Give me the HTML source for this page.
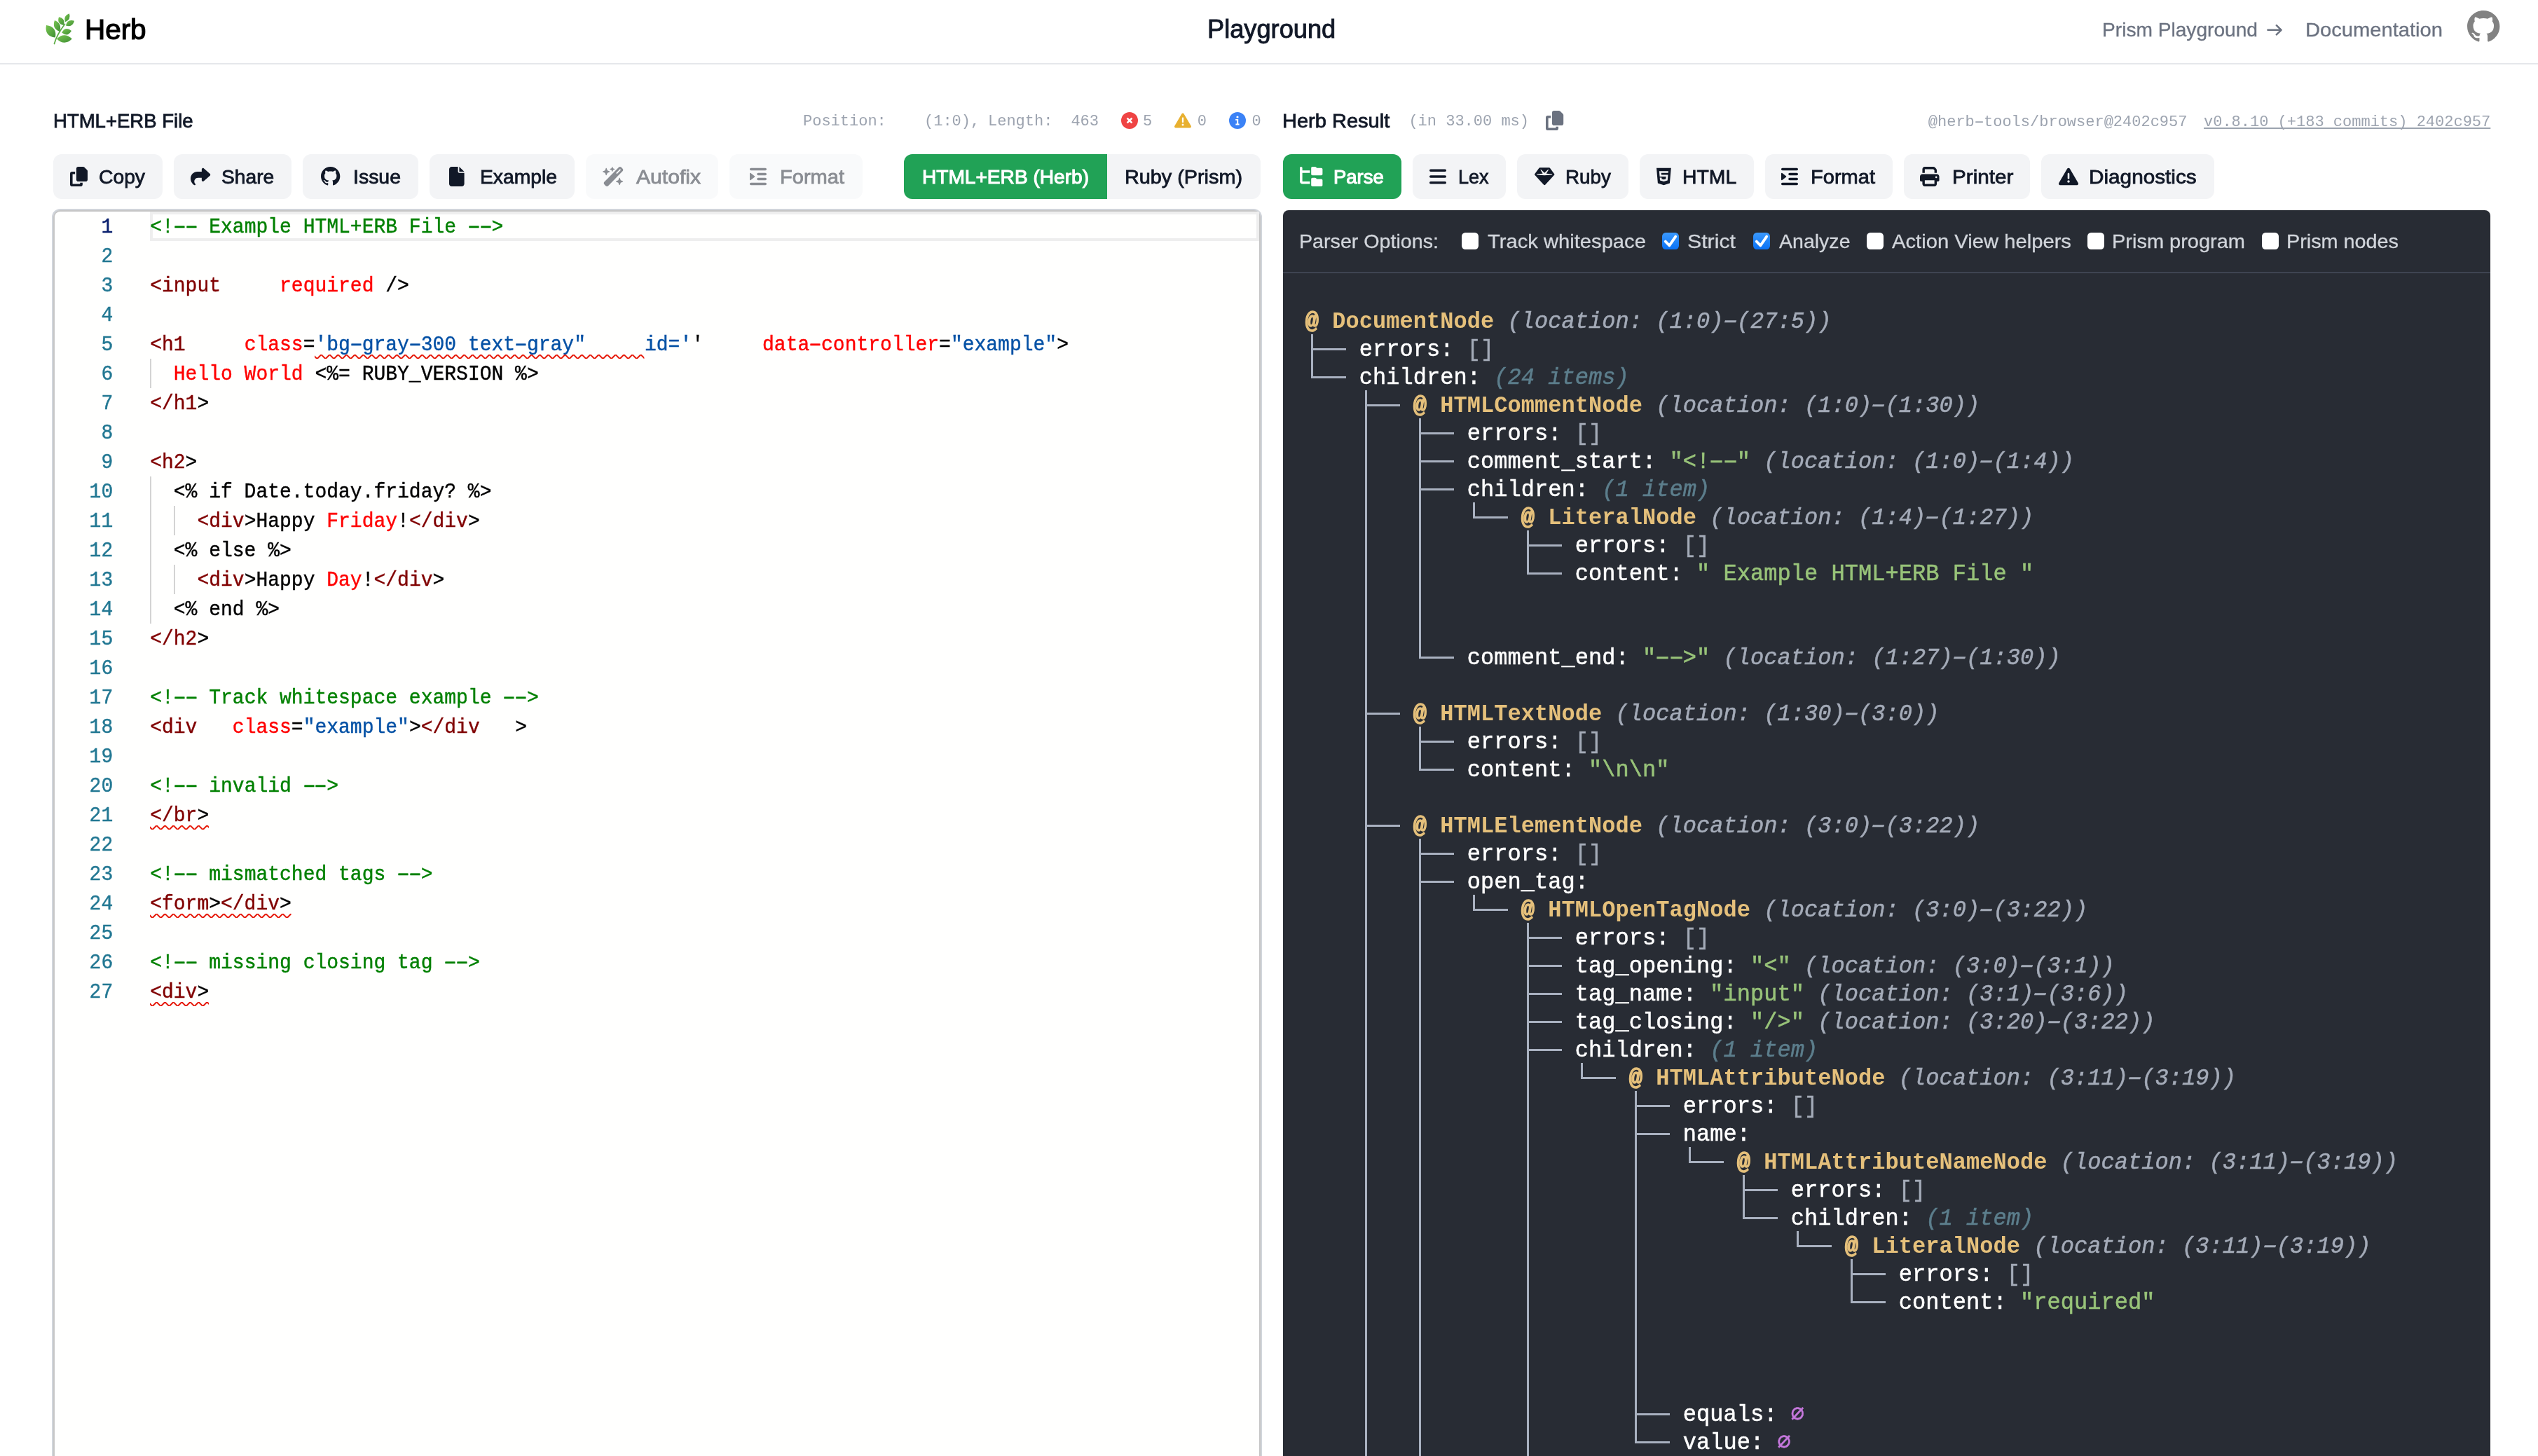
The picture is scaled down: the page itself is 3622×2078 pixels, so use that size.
<!DOCTYPE html>
<html><head><meta charset="utf-8"><style>
html,body{margin:0;padding:0;background:#fff;overflow:hidden;}
@media (max-width:2400px){#root{zoom:1 !important;}}
#root{zoom:2;will-change:transform;position:relative;width:1811px;height:1039px;overflow:hidden;background:#fff;font-family:"Liberation Sans", sans-serif;}
.t{position:absolute;white-space:pre;margin:0;padding:0;}
.m{font-family:"Liberation Mono", monospace;}
svg.t{overflow:visible;}
b.hy{display:inline-block;font-weight:inherit;transform:scaleX(1.75);}
</style></head><body><div id="root">
<div class="t" style="left:0.00px;top:45.00px;width:1811.00px;height:1.00px;background:#e5e7eb"></div>
<svg class="t" style="left:30px;top:7.5px;width:26px;height:26px" viewBox="0 0 52 52"><defs><linearGradient id="lf" x1="0" y1="0" x2="1" y2="1"><stop offset="0" stop-color="#79c552"/><stop offset="1" stop-color="#3f8f33"/></linearGradient></defs><path d="M17.5 47.5 C20 38 26 28 32.5 19.5" stroke="#5fae48" stroke-width="1.8" fill="none" stroke-linecap="round"/><path d="M18.90 38.60Q21.73 23.00 6.00 21.00Q3.17 36.60 18.90 38.60Z" fill="url(#lf)"/><path d="M21.00 40.40Q31.85 50.95 42.80 40.50Q31.95 29.95 21.00 40.40Z" fill="url(#lf)"/><path d="M25.00 30.00Q29.29 18.59 18.00 14.00Q13.71 25.41 25.00 30.00Z" fill="url(#lf)"/><path d="M28.20 31.40Q36.56 38.57 42.00 29.00Q33.64 21.83 28.20 31.40Z" fill="url(#lf)"/><path d="M30.70 21.00Q33.86 11.42 24.00 9.30Q20.84 18.88 30.70 21.00Z" fill="url(#lf)"/><path d="M33.90 21.40Q43.54 24.68 46.00 14.80Q36.36 11.52 33.90 21.40Z" fill="url(#lf)"/><path d="M32.90 16.40Q41.72 13.24 38.90 4.30Q30.08 7.46 32.90 16.40Z" fill="url(#lf)"/></svg>
<div class="t" style="left:60.50px;top:11.22px;font-size:20px;line-height:20px;color:#000000;font-weight:400;transform:scaleX(1.0104);transform-origin:0 0;-webkit-text-stroke:0.6px #000000;">Herb</div>
<div class="t" style="left:861.30px;top:11.76px;font-size:18px;line-height:18px;color:#111827;font-weight:400;transform:scaleX(1.0059);transform-origin:0 0;-webkit-text-stroke:0.45px #111827;">Playground</div>
<div class="t" style="left:1500.00px;top:14.40px;font-size:14px;line-height:14px;color:#6b7280;font-weight:400;transform:scaleX(1.0046);transform-origin:0 0;-webkit-text-stroke:0.15px #6b7280;">Prism Playground</div>
<svg class="t" style="left:1618px;top:17.6px;width:10.6px;height:7.8px" viewBox="0 0 10.6 7.8"><path d="M0.2 3.9H9.8M6.4 0.6L9.8 3.9L6.4 7.2" stroke="#6b7280" stroke-width="1.25" fill="none" stroke-linecap="round" stroke-linejoin="round"/></svg>
<div class="t" style="left:1644.75px;top:14.40px;font-size:14px;line-height:14px;color:#6b7280;font-weight:400;transform:scaleX(1.0407);transform-origin:0 0;-webkit-text-stroke:0.15px #6b7280;">Documentation</div>
<svg class="t" style="left:1760.50px;top:7.30px;width:23.20px;height:22.80px" viewBox="0 0 16 16" preserveAspectRatio="none" fill="#828282"><path d="M8 0C3.58 0 0 3.58 0 8c0 3.54 2.29 6.53 5.47 7.59.4.07.55-.17.55-.38 0-.19-.01-.82-.01-1.49-2.01.37-2.53-.49-2.69-.94-.09-.23-.48-.94-.82-1.13-.28-.15-.68-.52-.01-.53.63-.01 1.08.58 1.23.82.72 1.21 1.87.87 2.33.66.07-.52.28-.87.51-1.07-1.78-.2-3.64-.89-3.64-3.95 0-.87.31-1.59.82-2.15-.08-.2-.36-1.02.08-2.12 0 0 .67-.21 2.2.82.64-.18 1.32-.27 2-.27.68 0 1.360.09 2 .27 1.53-1.04 2.2-.82 2.2-.82.44 1.1.16 1.92.08 2.12.51.56.82 1.27.82 2.15 0 3.07-1.87 3.75-3.65 3.95.29.25.54.73.54 1.48 0 1.07-.01 1.93-.01 2.2 0 .21.15.46.55.38A8.013 8.013 0 0016 8c0-4.42-3.58-8-8-8z"/></svg>
<div class="t" style="left:37.75px;top:79.55px;font-size:14px;line-height:14px;color:#111827;font-weight:400;transform:scaleX(0.9831);transform-origin:0 0;-webkit-text-stroke:0.4px #111827;">HTML+ERB File</div>
<div class="t m" style="left:573.00px;top:81.72px;font-size:11px;line-height:11px;color:#9ca3af;">Position:</div>
<div class="t m" style="left:659.50px;top:81.72px;font-size:11px;line-height:11px;color:#9ca3af;">(1:0),</div>
<div class="t m" style="left:705.00px;top:81.72px;font-size:11px;line-height:11px;color:#9ca3af;">Length:</div>
<div class="t m" style="left:764.20px;top:81.72px;font-size:11px;line-height:11px;color:#9ca3af;">463</div>
<svg class="t" style="left:799.75px;top:79.9px;width:12px;height:12px" viewBox="0 0 12 12"><circle cx="6" cy="6" r="6" fill="#ef4444"/><path d="M4.3 4.3L7.7 7.7M7.7 4.3L4.3 7.7" stroke="#fff" stroke-width="1.3" stroke-linecap="butt"/></svg>
<div class="t m" style="left:815.50px;top:81.72px;font-size:11px;line-height:11px;color:#9ca3af;">5</div>
<svg class="t" style="left:838.00px;top:80.00px;width:12.00px;height:12.00px" viewBox="0 0 512 512" preserveAspectRatio="none" fill="#e8b02f"><path d="M256 32c14.2 0 27.3 7.5 34.5 19.8l216 368c7.3 12.4 7.3 27.7 .2 40.1S486.3 480 472 480H40c-14.3 0-27.6-7.7-34.7-20.1s-7-27.8 .2-40.1l216-368C228.7 39.5 241.8 32 256 32zm0 128c-13.3 0-24 10.7-24 24V296c0 13.3 10.7 24 24 24s24-10.7 24-24V184c0-13.3-10.7-24-24-24zm32 224a32 32 0 1 0 -64 0 32 32 0 1 0 64 0z"/></svg>
<div class="t m" style="left:854.40px;top:81.72px;font-size:11px;line-height:11px;color:#9ca3af;">0</div>
<svg class="t" style="left:877px;top:79.9px;width:12px;height:12px" viewBox="0 0 12 12"><circle cx="6" cy="6" r="6" fill="#3b82f6"/><path d="M4.6 5H6.6V8.3H7.3V9.2H4.7V8.3H5.5V5.9H4.6Z" fill="#fff"/><circle cx="6" cy="3.5" r="0.8" fill="#fff"/></svg>
<div class="t m" style="left:893.25px;top:81.72px;font-size:11px;line-height:11px;color:#9ca3af;">0</div>
<div class="t" style="left:38.00px;top:110.00px;width:78.00px;height:32.00px;background:#f3f4f6;border-radius:6px;"></div>
<svg class="t" style="left:50.00px;top:119.00px;width:12.50px;height:14.00px" viewBox="0 0 448 512" preserveAspectRatio="none" fill="#111827"><path d="M208 0H332.1c12.7 0 24.9 5.1 33.9 14.1l67.9 67.9c9 9 14.1 21.2 14.1 33.9V336c0 26.5-21.5 48-48 48H208c-26.5 0-48-21.5-48-48V48c0-26.5 21.5-48 48-48zM48 128h80v64H64V448H256V416h64v48c0 26.5-21.5 48-48 48H48c-26.5 0-48-21.5-48-48V176c0-26.5 21.5-48 48-48z"/></svg>
<div class="t" style="left:70.40px;top:119.65px;font-size:14px;line-height:14px;color:#111827;font-weight:400;transform:scaleX(1.0097);transform-origin:0 0;-webkit-text-stroke:0.4px #111827;">Copy</div>
<div class="t" style="left:124.00px;top:110.00px;width:84.00px;height:32.00px;background:#f3f4f6;border-radius:6px;"></div>
<svg class="t" style="left:135.90px;top:119.00px;width:14.10px;height:14.00px" viewBox="0 0 512 512" preserveAspectRatio="none" fill="#111827"><path d="M307 34.8c-11.5 5.1-19 16.6-19 29.2v64H176C78.8 128 0 206.8 0 304C0 417.3 81.5 467.9 100.2 478.1c2.5 1.4 5.3 1.9 8.1 1.9c10.9 0 19.7-8.9 19.7-19.7c0-7.5-4.3-14.4-9.8-19.5C108.8 431.9 96 414.4 96 384c0-53 43-96 96-96h96v64c0 12.6 7.4 24.1 19 29.2s25 3 34.4-5.4l160-144c6.7-6.1 10.6-14.7 10.6-23.8s-3.8-17.7-10.6-23.8l-160-144c-9.4-8.5-22.9-10.6-34.4-5.4z"/></svg>
<div class="t" style="left:158.15px;top:119.65px;font-size:14px;line-height:14px;color:#111827;font-weight:400;transform:scaleX(1.0065);transform-origin:0 0;-webkit-text-stroke:0.4px #111827;">Share</div>
<div class="t" style="left:216.00px;top:110.00px;width:82.50px;height:32.00px;background:#f3f4f6;border-radius:6px;"></div>
<svg class="t" style="left:229.00px;top:119.20px;width:13.65px;height:13.60px" viewBox="0 0 16 16" preserveAspectRatio="none" fill="#111827"><path d="M8 0C3.58 0 0 3.58 0 8c0 3.54 2.29 6.53 5.47 7.59.4.07.55-.17.55-.38 0-.19-.01-.82-.01-1.49-2.01.37-2.53-.49-2.69-.94-.09-.23-.48-.94-.82-1.13-.28-.15-.68-.52-.01-.53.63-.01 1.08.58 1.23.82.72 1.21 1.87.87 2.33.66.07-.52.28-.87.51-1.07-1.78-.2-3.64-.89-3.64-3.95 0-.87.31-1.59.82-2.15-.08-.2-.36-1.02.08-2.12 0 0 .67-.21 2.2.82.64-.18 1.32-.27 2-.27.68 0 1.360.09 2 .27 1.53-1.04 2.2-.82 2.2-.82.44 1.1.16 1.92.08 2.12.51.56.82 1.27.82 2.15 0 3.07-1.87 3.75-3.65 3.95.29.25.54.73.54 1.48 0 1.07-.01 1.93-.01 2.2 0 .21.15.46.55.38A8.013 8.013 0 0016 8c0-4.42-3.58-8-8-8z"/></svg>
<div class="t" style="left:252.00px;top:119.65px;font-size:14px;line-height:14px;color:#111827;font-weight:400;transform:scaleX(1.0161);transform-origin:0 0;-webkit-text-stroke:0.4px #111827;">Issue</div>
<div class="t" style="left:306.50px;top:110.00px;width:103.50px;height:32.00px;background:#f3f4f6;border-radius:6px;"></div>
<svg class="t" style="left:320.50px;top:119.00px;width:10.80px;height:14.00px" viewBox="0 0 384 512" preserveAspectRatio="none" fill="#111827"><path d="M0 64C0 28.7 28.7 0 64 0H224V128c0 17.7 14.3 32 32 32H384V448c0 35.3-28.7 64-64 64H64c-35.3 0-64-28.7-64-64V64zm384 64H256V0L384 128z"/></svg>
<div class="t" style="left:342.50px;top:119.65px;font-size:14px;line-height:14px;color:#111827;font-weight:400;transform:scaleX(1.0098);transform-origin:0 0;-webkit-text-stroke:0.4px #111827;">Example</div>
<div class="t" style="left:418.00px;top:110.00px;width:94.50px;height:32.00px;background:#f9fafb;border-radius:6px;"></div>
<svg class="t" style="left:430.00px;top:119.00px;width:15.50px;height:14.00px" viewBox="0 0 576 512" preserveAspectRatio="none" fill="#8a8d93"><path d="M234.7 42.7L197 56.8c-3 1.1-5 4-5 7.2s2 6.1 5 7.2l37.7 14.1L248.8 123.1c1.1 3 4 5 7.2 5s6.1-2 7.2-5l14.1-37.7L315 71.2c3-1.1 5-4 5-7.2s-2-6.1-5-7.2L277.3 42.7 263.2 5c-1.1-3-4-5-7.2-5s-6.1 2-7.2 5L234.7 42.7zM46.1 395.4c-18.7 18.7-18.7 49.1 0 67.9l34.6 34.6c18.7 18.7 49.1 18.7 67.9 0L529.9 116.5c18.7-18.7 18.7-49.1 0-67.9L495.3 14.1c-18.7-18.7-49.1-18.7-67.9 0L46.1 395.4zM484.6 82.6l-105 105-23.3-23.3 105-105 23.3 23.3zM7.5 117.2C3 118.9 0 123.2 0 128s3 9.1 7.5 10.8L64 160l21.2 56.5c1.7 4.5 6 7.5 10.8 7.5s9.1-3 10.8-7.5L128 160l56.5-21.2c4.5-1.7 7.5-6 7.5-10.8s-3-9.1-7.5-10.8L128 96 106.8 39.5C105.1 35 100.8 32 96 32s-9.1 3-10.8 7.5L64 96 7.5 117.2zm352 256c-4.5 1.7-7.5 6-7.5 10.8s3 9.1 7.5 10.8L416 416l21.2 56.5c1.7 4.5 6 7.5 10.8 7.5s9.1-3 10.8-7.5L480 416l56.5-21.2c4.5-1.7 7.5-6 7.5-10.8s-3-9.1-7.5-10.8L480 352l-21.2-56.5c-1.7-4.5-6-7.5-10.8-7.5s-9.1 3-10.8 7.5L416 352l-56.5 21.2z"/></svg>
<div class="t" style="left:454.00px;top:119.65px;font-size:14px;line-height:14px;color:#8a8d93;font-weight:400;transform:scaleX(1.0748);transform-origin:0 0;-webkit-text-stroke:0.4px #8a8d93;">Autofix</div>
<div class="t" style="left:520.50px;top:110.00px;width:94.90px;height:32.00px;background:#f9fafb;border-radius:6px;"></div>
<svg class="t" style="left:534.90px;top:119.00px;width:12.00px;height:14.00px" viewBox="0 0 448 512" preserveAspectRatio="none" fill="#8a8d93"><path d="M0 64C0 46.3 14.3 32 32 32H416c17.7 0 32 14.3 32 32s-14.3 32-32 32H32C14.3 96 0 81.7 0 64zM192 192c0-17.7 14.3-32 32-32H416c17.7 0 32 14.3 32 32s-14.3 32-32 32H224c-17.7 0-32-14.3-32-32zm32 96H416c17.7 0 32 14.3 32 32s-14.3 32-32 32H224c-17.7 0-32-14.3-32-32s14.3-32 32-32zM0 448c0-17.7 14.3-32 32-32H416c17.7 0 32 14.3 32 32s-14.3 32-32 32H32c-17.7 0-32-14.3-32-32zM127.8 268.6L25.8 347.9C15.3 356.1 0 348.6 0 335.3V176.7c0-13.3 15.3-20.8 25.8-12.6l101.9 79.3c8.2 6.4 8.2 18.9 0 25.3z"/></svg>
<div class="t" style="left:556.25px;top:119.65px;font-size:14px;line-height:14px;color:#8a8d93;font-weight:400;transform:scaleX(1.0375);transform-origin:0 0;-webkit-text-stroke:0.4px #8a8d93;">Format</div>
<div class="t" style="left:645.00px;top:110.00px;width:254.50px;height:32.00px;background:#f3f4f6;border-radius:6px"></div>
<div class="t" style="left:645.00px;top:110.00px;width:145.00px;height:32.00px;background:#21a256;border-radius:6px 0 0 6px"></div>
<div class="t" style="left:657.90px;top:119.65px;font-size:14px;line-height:14px;color:#ffffff;font-weight:400;transform:scaleX(1.0031);transform-origin:0 0;-webkit-text-stroke:0.55px #ffffff;">HTML+ERB (Herb)</div>
<div class="t" style="left:802.50px;top:119.65px;font-size:14px;line-height:14px;color:#111827;font-weight:400;transform:scaleX(1.0285);transform-origin:0 0;-webkit-text-stroke:0.4px #111827;">Ruby (Prism)</div>
<div class="t" style="left:37.00px;top:149.00px;width:863.50px;height:951.00px;background:#d1d5db;border-radius:6px"></div>
<div class="t" style="left:38.00px;top:150.00px;width:861.50px;height:950.00px;background:#c6c6c6;border-radius:5px"></div>
<div class="t" style="left:39.00px;top:151.00px;width:859.50px;height:949.00px;background:#fffffe;border-radius:4px"></div>
<div class="t" style="left:107.10px;top:151.20px;width:791.40px;height:20.80px;border:2px solid #eeeeee;box-sizing:border-box"></div>
<div class="t" style="left:107.10px;top:256.00px;width:1.00px;height:21.00px;background:#d3d3d3"></div>
<div class="t" style="left:107.10px;top:340.00px;width:1.00px;height:21.00px;background:#d3d3d3"></div>
<div class="t" style="left:107.10px;top:361.00px;width:1.00px;height:21.00px;background:#d3d3d3"></div>
<div class="t" style="left:107.10px;top:382.00px;width:1.00px;height:21.00px;background:#d3d3d3"></div>
<div class="t" style="left:107.10px;top:403.00px;width:1.00px;height:21.00px;background:#d3d3d3"></div>
<div class="t" style="left:107.10px;top:424.00px;width:1.00px;height:21.00px;background:#d3d3d3"></div>
<div class="t" style="left:123.90px;top:361.00px;width:1.00px;height:21.00px;background:#d3d3d3"></div>
<div class="t" style="left:123.90px;top:403.00px;width:1.00px;height:21.00px;background:#d3d3d3"></div>
<div class="t m" style="left:20.60px;top:151.82px;width:60px;text-align:right;font-size:14px;line-height:21.0px;-webkit-text-stroke:0.2px;color:#0b216f;transform:scaleY(1.07);transform-origin:0 14.226px">1</div>
<div class="t m" style="left:107.10px;top:151.82px;font-size:14px;line-height:21.0px;-webkit-text-stroke:0.2px;transform:scaleY(1.07);transform-origin:0 14.226px"><span style="color:#008000">&lt;!<b class="hy">-</b><b class="hy">-</b> Example HTML+ERB File <b class="hy">-</b><b class="hy">-</b>&gt;</span></div>
<div class="t m" style="left:20.60px;top:172.82px;width:60px;text-align:right;font-size:14px;line-height:21.0px;-webkit-text-stroke:0.2px;color:#237893;transform:scaleY(1.07);transform-origin:0 14.226px">2</div>
<div class="t m" style="left:20.60px;top:193.82px;width:60px;text-align:right;font-size:14px;line-height:21.0px;-webkit-text-stroke:0.2px;color:#237893;transform:scaleY(1.07);transform-origin:0 14.226px">3</div>
<div class="t m" style="left:107.10px;top:193.82px;font-size:14px;line-height:21.0px;-webkit-text-stroke:0.2px;transform:scaleY(1.07);transform-origin:0 14.226px"><span style="color:#800000">&lt;input</span><span style="color:#000000">     </span><span style="color:#ff0000">required</span><span style="color:#000000"> /&gt;</span></div>
<div class="t m" style="left:20.60px;top:214.82px;width:60px;text-align:right;font-size:14px;line-height:21.0px;-webkit-text-stroke:0.2px;color:#237893;transform:scaleY(1.07);transform-origin:0 14.226px">4</div>
<div class="t m" style="left:20.60px;top:235.82px;width:60px;text-align:right;font-size:14px;line-height:21.0px;-webkit-text-stroke:0.2px;color:#237893;transform:scaleY(1.07);transform-origin:0 14.226px">5</div>
<div class="t m" style="left:107.10px;top:235.82px;font-size:14px;line-height:21.0px;-webkit-text-stroke:0.2px;transform:scaleY(1.07);transform-origin:0 14.226px"><span style="color:#800000">&lt;h1</span><span style="color:#000000">     </span><span style="color:#ff0000">class</span><span style="color:#000000">=</span><span style="color:#0451a5">&#x27;bg<b class="hy">-</b>gray<b class="hy">-</b>300 text<b class="hy">-</b>gray&quot;</span><span style="color:#000000">     </span><span style="color:#0451a5">id=&#x27;</span><span style="color:#000000">&#x27;</span><span style="color:#000000">     </span><span style="color:#ff0000">data<b class="hy">-</b>controller</span><span style="color:#000000">=</span><span style="color:#0451a5">&quot;example&quot;</span><span style="color:#000000">&gt;</span></div>
<div class="t m" style="left:20.60px;top:256.82px;width:60px;text-align:right;font-size:14px;line-height:21.0px;-webkit-text-stroke:0.2px;color:#237893;transform:scaleY(1.07);transform-origin:0 14.226px">6</div>
<div class="t m" style="left:107.10px;top:256.82px;font-size:14px;line-height:21.0px;-webkit-text-stroke:0.2px;transform:scaleY(1.07);transform-origin:0 14.226px"><span style="color:#000000">  </span><span style="color:#ff0000">Hello World</span><span style="color:#000000"> &lt;%= RUBY_VERSION %&gt;</span></div>
<div class="t m" style="left:20.60px;top:277.82px;width:60px;text-align:right;font-size:14px;line-height:21.0px;-webkit-text-stroke:0.2px;color:#237893;transform:scaleY(1.07);transform-origin:0 14.226px">7</div>
<div class="t m" style="left:107.10px;top:277.82px;font-size:14px;line-height:21.0px;-webkit-text-stroke:0.2px;transform:scaleY(1.07);transform-origin:0 14.226px"><span style="color:#800000">&lt;/h1</span><span style="color:#000000">&gt;</span></div>
<div class="t m" style="left:20.60px;top:298.82px;width:60px;text-align:right;font-size:14px;line-height:21.0px;-webkit-text-stroke:0.2px;color:#237893;transform:scaleY(1.07);transform-origin:0 14.226px">8</div>
<div class="t m" style="left:20.60px;top:319.82px;width:60px;text-align:right;font-size:14px;line-height:21.0px;-webkit-text-stroke:0.2px;color:#237893;transform:scaleY(1.07);transform-origin:0 14.226px">9</div>
<div class="t m" style="left:107.10px;top:319.82px;font-size:14px;line-height:21.0px;-webkit-text-stroke:0.2px;transform:scaleY(1.07);transform-origin:0 14.226px"><span style="color:#800000">&lt;h2</span><span style="color:#000000">&gt;</span></div>
<div class="t m" style="left:20.60px;top:340.82px;width:60px;text-align:right;font-size:14px;line-height:21.0px;-webkit-text-stroke:0.2px;color:#237893;transform:scaleY(1.07);transform-origin:0 14.226px">10</div>
<div class="t m" style="left:107.10px;top:340.82px;font-size:14px;line-height:21.0px;-webkit-text-stroke:0.2px;transform:scaleY(1.07);transform-origin:0 14.226px"><span style="color:#000000">  &lt;% if Date.today.friday? %&gt;</span></div>
<div class="t m" style="left:20.60px;top:361.82px;width:60px;text-align:right;font-size:14px;line-height:21.0px;-webkit-text-stroke:0.2px;color:#237893;transform:scaleY(1.07);transform-origin:0 14.226px">11</div>
<div class="t m" style="left:107.10px;top:361.82px;font-size:14px;line-height:21.0px;-webkit-text-stroke:0.2px;transform:scaleY(1.07);transform-origin:0 14.226px"><span style="color:#000000">    </span><span style="color:#800000">&lt;div</span><span style="color:#000000">&gt;Happy </span><span style="color:#ff0000">Friday</span><span style="color:#000000">!</span><span style="color:#800000">&lt;/div</span><span style="color:#000000">&gt;</span></div>
<div class="t m" style="left:20.60px;top:382.82px;width:60px;text-align:right;font-size:14px;line-height:21.0px;-webkit-text-stroke:0.2px;color:#237893;transform:scaleY(1.07);transform-origin:0 14.226px">12</div>
<div class="t m" style="left:107.10px;top:382.82px;font-size:14px;line-height:21.0px;-webkit-text-stroke:0.2px;transform:scaleY(1.07);transform-origin:0 14.226px"><span style="color:#000000">  &lt;% else %&gt;</span></div>
<div class="t m" style="left:20.60px;top:403.82px;width:60px;text-align:right;font-size:14px;line-height:21.0px;-webkit-text-stroke:0.2px;color:#237893;transform:scaleY(1.07);transform-origin:0 14.226px">13</div>
<div class="t m" style="left:107.10px;top:403.82px;font-size:14px;line-height:21.0px;-webkit-text-stroke:0.2px;transform:scaleY(1.07);transform-origin:0 14.226px"><span style="color:#000000">    </span><span style="color:#800000">&lt;div</span><span style="color:#000000">&gt;Happy </span><span style="color:#ff0000">Day</span><span style="color:#000000">!</span><span style="color:#800000">&lt;/div</span><span style="color:#000000">&gt;</span></div>
<div class="t m" style="left:20.60px;top:424.82px;width:60px;text-align:right;font-size:14px;line-height:21.0px;-webkit-text-stroke:0.2px;color:#237893;transform:scaleY(1.07);transform-origin:0 14.226px">14</div>
<div class="t m" style="left:107.10px;top:424.82px;font-size:14px;line-height:21.0px;-webkit-text-stroke:0.2px;transform:scaleY(1.07);transform-origin:0 14.226px"><span style="color:#000000">  &lt;% end %&gt;</span></div>
<div class="t m" style="left:20.60px;top:445.82px;width:60px;text-align:right;font-size:14px;line-height:21.0px;-webkit-text-stroke:0.2px;color:#237893;transform:scaleY(1.07);transform-origin:0 14.226px">15</div>
<div class="t m" style="left:107.10px;top:445.82px;font-size:14px;line-height:21.0px;-webkit-text-stroke:0.2px;transform:scaleY(1.07);transform-origin:0 14.226px"><span style="color:#800000">&lt;/h2</span><span style="color:#000000">&gt;</span></div>
<div class="t m" style="left:20.60px;top:466.82px;width:60px;text-align:right;font-size:14px;line-height:21.0px;-webkit-text-stroke:0.2px;color:#237893;transform:scaleY(1.07);transform-origin:0 14.226px">16</div>
<div class="t m" style="left:20.60px;top:487.82px;width:60px;text-align:right;font-size:14px;line-height:21.0px;-webkit-text-stroke:0.2px;color:#237893;transform:scaleY(1.07);transform-origin:0 14.226px">17</div>
<div class="t m" style="left:107.10px;top:487.82px;font-size:14px;line-height:21.0px;-webkit-text-stroke:0.2px;transform:scaleY(1.07);transform-origin:0 14.226px"><span style="color:#008000">&lt;!<b class="hy">-</b><b class="hy">-</b> Track whitespace example <b class="hy">-</b><b class="hy">-</b>&gt;</span></div>
<div class="t m" style="left:20.60px;top:508.82px;width:60px;text-align:right;font-size:14px;line-height:21.0px;-webkit-text-stroke:0.2px;color:#237893;transform:scaleY(1.07);transform-origin:0 14.226px">18</div>
<div class="t m" style="left:107.10px;top:508.82px;font-size:14px;line-height:21.0px;-webkit-text-stroke:0.2px;transform:scaleY(1.07);transform-origin:0 14.226px"><span style="color:#800000">&lt;div</span><span style="color:#000000">   </span><span style="color:#ff0000">class</span><span style="color:#000000">=</span><span style="color:#0451a5">&quot;example&quot;</span><span style="color:#000000">&gt;</span><span style="color:#800000">&lt;/div</span><span style="color:#000000">   &gt;</span></div>
<div class="t m" style="left:20.60px;top:529.82px;width:60px;text-align:right;font-size:14px;line-height:21.0px;-webkit-text-stroke:0.2px;color:#237893;transform:scaleY(1.07);transform-origin:0 14.226px">19</div>
<div class="t m" style="left:20.60px;top:550.82px;width:60px;text-align:right;font-size:14px;line-height:21.0px;-webkit-text-stroke:0.2px;color:#237893;transform:scaleY(1.07);transform-origin:0 14.226px">20</div>
<div class="t m" style="left:107.10px;top:550.82px;font-size:14px;line-height:21.0px;-webkit-text-stroke:0.2px;transform:scaleY(1.07);transform-origin:0 14.226px"><span style="color:#008000">&lt;!<b class="hy">-</b><b class="hy">-</b> invalid <b class="hy">-</b><b class="hy">-</b>&gt;</span></div>
<div class="t m" style="left:20.60px;top:571.82px;width:60px;text-align:right;font-size:14px;line-height:21.0px;-webkit-text-stroke:0.2px;color:#237893;transform:scaleY(1.07);transform-origin:0 14.226px">21</div>
<div class="t m" style="left:107.10px;top:571.82px;font-size:14px;line-height:21.0px;-webkit-text-stroke:0.2px;transform:scaleY(1.07);transform-origin:0 14.226px"><span style="color:#800000">&lt;/br</span><span style="color:#000000">&gt;</span></div>
<div class="t m" style="left:20.60px;top:592.82px;width:60px;text-align:right;font-size:14px;line-height:21.0px;-webkit-text-stroke:0.2px;color:#237893;transform:scaleY(1.07);transform-origin:0 14.226px">22</div>
<div class="t m" style="left:20.60px;top:613.82px;width:60px;text-align:right;font-size:14px;line-height:21.0px;-webkit-text-stroke:0.2px;color:#237893;transform:scaleY(1.07);transform-origin:0 14.226px">23</div>
<div class="t m" style="left:107.10px;top:613.82px;font-size:14px;line-height:21.0px;-webkit-text-stroke:0.2px;transform:scaleY(1.07);transform-origin:0 14.226px"><span style="color:#008000">&lt;!<b class="hy">-</b><b class="hy">-</b> mismatched tags <b class="hy">-</b><b class="hy">-</b>&gt;</span></div>
<div class="t m" style="left:20.60px;top:634.82px;width:60px;text-align:right;font-size:14px;line-height:21.0px;-webkit-text-stroke:0.2px;color:#237893;transform:scaleY(1.07);transform-origin:0 14.226px">24</div>
<div class="t m" style="left:107.10px;top:634.82px;font-size:14px;line-height:21.0px;-webkit-text-stroke:0.2px;transform:scaleY(1.07);transform-origin:0 14.226px"><span style="color:#800000">&lt;form</span><span style="color:#000000">&gt;</span><span style="color:#800000">&lt;/div</span><span style="color:#000000">&gt;</span></div>
<div class="t m" style="left:20.60px;top:655.82px;width:60px;text-align:right;font-size:14px;line-height:21.0px;-webkit-text-stroke:0.2px;color:#237893;transform:scaleY(1.07);transform-origin:0 14.226px">25</div>
<div class="t m" style="left:20.60px;top:676.82px;width:60px;text-align:right;font-size:14px;line-height:21.0px;-webkit-text-stroke:0.2px;color:#237893;transform:scaleY(1.07);transform-origin:0 14.226px">26</div>
<div class="t m" style="left:107.10px;top:676.82px;font-size:14px;line-height:21.0px;-webkit-text-stroke:0.2px;transform:scaleY(1.07);transform-origin:0 14.226px"><span style="color:#008000">&lt;!<b class="hy">-</b><b class="hy">-</b> missing closing tag <b class="hy">-</b><b class="hy">-</b>&gt;</span></div>
<div class="t m" style="left:20.60px;top:697.82px;width:60px;text-align:right;font-size:14px;line-height:21.0px;-webkit-text-stroke:0.2px;color:#237893;transform:scaleY(1.07);transform-origin:0 14.226px">27</div>
<div class="t m" style="left:107.10px;top:697.82px;font-size:14px;line-height:21.0px;-webkit-text-stroke:0.2px;transform:scaleY(1.07);transform-origin:0 14.226px"><span style="color:#800000">&lt;div</span><span style="color:#000000">&gt;</span></div>
<svg class="t" style="left:224.70px;top:253.00px;width:235.20px;height:3px" viewBox="0 0 235.20 3" preserveAspectRatio="none"><defs><pattern id="sq5" width="6" height="3" patternUnits="userSpaceOnUse"><g fill="#e51400"><polygon points="5.5,0 2.5,3 1.1,3 4.1,0"/><polygon points="4,0 6,2 6,0.6 5.4,0"/><polygon points="0,2 1,3 2.4,3 0,0.6"/></g></pattern></defs><rect width="235.20" height="3" fill="url(#sq5)"/></svg>
<svg class="t" style="left:107.10px;top:589.00px;width:42.00px;height:3px" viewBox="0 0 42.00 3" preserveAspectRatio="none"><defs><pattern id="sq21" width="6" height="3" patternUnits="userSpaceOnUse"><g fill="#e51400"><polygon points="5.5,0 2.5,3 1.1,3 4.1,0"/><polygon points="4,0 6,2 6,0.6 5.4,0"/><polygon points="0,2 1,3 2.4,3 0,0.6"/></g></pattern></defs><rect width="42.00" height="3" fill="url(#sq21)"/></svg>
<svg class="t" style="left:107.10px;top:652.00px;width:100.80px;height:3px" viewBox="0 0 100.80 3" preserveAspectRatio="none"><defs><pattern id="sq24" width="6" height="3" patternUnits="userSpaceOnUse"><g fill="#e51400"><polygon points="5.5,0 2.5,3 1.1,3 4.1,0"/><polygon points="4,0 6,2 6,0.6 5.4,0"/><polygon points="0,2 1,3 2.4,3 0,0.6"/></g></pattern></defs><rect width="100.80" height="3" fill="url(#sq24)"/></svg>
<svg class="t" style="left:107.10px;top:715.00px;width:42.00px;height:3px" viewBox="0 0 42.00 3" preserveAspectRatio="none"><defs><pattern id="sq27" width="6" height="3" patternUnits="userSpaceOnUse"><g fill="#e51400"><polygon points="5.5,0 2.5,3 1.1,3 4.1,0"/><polygon points="4,0 6,2 6,0.6 5.4,0"/><polygon points="0,2 1,3 2.4,3 0,0.6"/></g></pattern></defs><rect width="42.00" height="3" fill="url(#sq27)"/></svg>
<div class="t" style="left:915.10px;top:79.35px;font-size:14px;line-height:14px;color:#111827;font-weight:400;transform:scaleX(1.0363);transform-origin:0 0;-webkit-text-stroke:0.4px #111827;">Herb Result</div>
<div class="t m" style="left:1005.20px;top:81.57px;font-size:11px;line-height:11px;color:#9ca3af;">(in 33.00 ms)</div>
<svg class="t" style="left:1102.85px;top:79.00px;width:12.60px;height:14.00px" viewBox="0 0 448 512" preserveAspectRatio="none" fill="#6b7280"><path d="M208 0H332.1c12.7 0 24.9 5.1 33.9 14.1l67.9 67.9c9 9 14.1 21.2 14.1 33.9V336c0 26.5-21.5 48-48 48H208c-26.5 0-48-21.5-48-48V48c0-26.5 21.5-48 48-48zM48 128h80v64H64V448H256V416h64v48c0 26.5-21.5 48-48 48H48c-26.5 0-48-21.5-48-48V176c0-26.5 21.5-48 48-48z"/></svg>
<div class="t m" style="left:1375.90px;top:81.82px;font-size:11px;line-height:11px;color:#9ca3af;">@herb<b class="hy" style="font-weight:normal">-</b>tools/browser@2402c957</div>
<div class="t m" style="left:1572.50px;top:81.82px;font-size:11px;line-height:11px;color:#9ca3af;text-decoration:underline;text-underline-offset:1px;text-decoration-skip-ink:none;">v0.8.10 (+183 commits) 2402c957</div>
<div class="t" style="left:915.50px;top:110.00px;width:84.50px;height:32.00px;background:#21a256;border-radius:6px;"></div>
<svg class="t" style="left:927.60px;top:119.00px;width:16.20px;height:14.00px" viewBox="0 0 576 512" preserveAspectRatio="none" fill="#ffffff"><path d="M64 32C64 14.3 49.7 0 32 0S0 14.3 0 32v96V384c0 35.3 28.7 64 64 64H256V384H64V160H256V96H64V32zM288 192c0 17.7 14.3 32 32 32H544c17.7 0 32-14.3 32-32V64c0-17.7-14.3-32-32-32H445.3c-8.5 0-16.6-3.4-22.6-9.4L409.4 9.4c-6-6-14.1-9.4-22.6-9.4H320c-17.7 0-32 14.3-32 32V192zm0 288c0 17.7 14.3 32 32 32H544c17.7 0 32-14.3 32-32V352c0-17.7-14.3-32-32-32H445.3c-8.5 0-16.6-3.4-22.6-9.4l-13.3-13.3c-6-6-14.1-9.4-22.6-9.4H320c-17.7 0-32 14.3-32 32V480z"/></svg>
<div class="t" style="left:951.40px;top:119.65px;font-size:14px;line-height:14px;color:#ffffff;font-weight:400;transform:scaleX(0.9816);transform-origin:0 0;-webkit-text-stroke:0.55px #ffffff;">Parse</div>
<div class="t" style="left:1008.00px;top:110.00px;width:66.50px;height:32.00px;background:#f3f4f6;border-radius:6px;"></div>
<svg class="t" style="left:1020.00px;top:119.00px;width:12.00px;height:14.00px" viewBox="0 0 448 512" preserveAspectRatio="none" fill="#111827"><path d="M0 96C0 78.3 14.3 64 32 64H416c17.7 0 32 14.3 32 32s-14.3 32-32 32H32C14.3 128 0 113.7 0 96zM0 256c0-17.7 14.3-32 32-32H416c17.7 0 32 14.3 32 32s-14.3 32-32 32H32c-17.7 0-32-14.3-32-32zM448 416c0 17.7-14.3 32-32 32H32c-17.7 0-32-14.3-32-32s14.3-32 32-32H416c17.7 0 32 14.3 32 32z"/></svg>
<div class="t" style="left:1040.30px;top:119.65px;font-size:14px;line-height:14px;color:#111827;font-weight:400;transform:scaleX(0.9658);transform-origin:0 0;-webkit-text-stroke:0.4px #111827;">Lex</div>
<div class="t" style="left:1082.50px;top:110.00px;width:79.50px;height:32.00px;background:#f3f4f6;border-radius:6px;"></div>
<svg class="t" style="left:1094.80px;top:119.00px;width:14.20px;height:14.00px" viewBox="0 0 512 512" preserveAspectRatio="none" fill="#111827"><path d="M116.7 33.8c4.5-6.1 11.7-9.8 19.3-9.8H376c7.6 0 14.8 3.6 19.3 9.8l112 152c6.8 9.2 6.1 21.9-1.5 30.4l-232 256c-4.5 5-11 7.9-17.8 7.9s-13.2-2.9-17.8-7.9l-232-256c-7.7-8.5-8.3-21.2-1.5-30.4l112-152zm38.5 39.8c-3.3 2.5-4.2 7-2.1 10.5l57.4 95.6L63.3 192c-4.1 .3-7.3 3.8-7.3 8s3.2 7.6 7.3 8l192 16c.4 0 .9 0 1.3 0l192-16c4.1-.3 7.3-3.8 7.3-8s-3.2-7.6-7.3-8L301.5 179.8l57.4-95.6c2.1-3.5 1.2-8.1-2.1-10.5s-7.9-2.1-10.8 .6L256 159.2 165.9 74.2c-2.9-2.8-7.5-3-10.8-.6z"/></svg>
<div class="t" style="left:1116.85px;top:119.65px;font-size:14px;line-height:14px;color:#111827;font-weight:400;transform:scaleX(0.9914);transform-origin:0 0;-webkit-text-stroke:0.4px #111827;">Ruby</div>
<div class="t" style="left:1170.00px;top:110.00px;width:81.50px;height:32.00px;background:#f3f4f6;border-radius:6px;"></div>
<svg class="t" style="left:1182.00px;top:119.00px;width:10.40px;height:14.00px" viewBox="0 0 384 512" preserveAspectRatio="none" fill="#111827"><path d="M0 32l34.9 395.8L191.5 480l157.6-52.2L384 32H0zm308.2 127.9H124.4l4.1 49.4h175.6l-13.6 148.4-97.9 27v.3h-1.1l-98.7-27.3-6-75.8h47.7L138 320l53.5 14.5 53.7-14.5 6-62.2H84.3L71.5 112.2h241.1l-4.4 47.7z"/></svg>
<div class="t" style="left:1200.30px;top:119.65px;font-size:14px;line-height:14px;color:#111827;font-weight:400;transform:scaleX(1.0128);transform-origin:0 0;-webkit-text-stroke:0.4px #111827;">HTML</div>
<div class="t" style="left:1259.50px;top:110.00px;width:91.00px;height:32.00px;background:#f3f4f6;border-radius:6px;"></div>
<svg class="t" style="left:1271.00px;top:119.00px;width:12.00px;height:14.00px" viewBox="0 0 448 512" preserveAspectRatio="none" fill="#111827"><path d="M0 64C0 46.3 14.3 32 32 32H416c17.7 0 32 14.3 32 32s-14.3 32-32 32H32C14.3 96 0 81.7 0 64zM192 192c0-17.7 14.3-32 32-32H416c17.7 0 32 14.3 32 32s-14.3 32-32 32H224c-17.7 0-32-14.3-32-32zm32 96H416c17.7 0 32 14.3 32 32s-14.3 32-32 32H224c-17.7 0-32-14.3-32-32s14.3-32 32-32zM0 448c0-17.7 14.3-32 32-32H416c17.7 0 32 14.3 32 32s-14.3 32-32 32H32c-17.7 0-32-14.3-32-32zM127.8 268.6L25.8 347.9C15.3 356.1 0 348.6 0 335.3V176.7c0-13.3 15.3-20.8 25.8-12.6l101.9 79.3c8.2 6.4 8.2 18.9 0 25.3z"/></svg>
<div class="t" style="left:1291.80px;top:119.65px;font-size:14px;line-height:14px;color:#111827;font-weight:400;transform:scaleX(1.0375);transform-origin:0 0;-webkit-text-stroke:0.4px #111827;">Format</div>
<div class="t" style="left:1358.50px;top:110.00px;width:90.00px;height:32.00px;background:#f3f4f6;border-radius:6px;"></div>
<svg class="t" style="left:1370.00px;top:119.00px;width:13.75px;height:14.00px" viewBox="0 0 512 512" preserveAspectRatio="none" fill="#111827"><path d="M128 0C92.7 0 64 28.7 64 64v96h64V64H354.7L384 93.3V160h64V93.3c0-17-6.7-33.3-18.7-45.3L400 18.7C388 6.7 371.7 0 354.7 0H128zM384 352v32 64H128V384 368 352H384zm64 32h32c17.7 0 32-14.3 32-32V256c0-35.3-28.7-64-64-64H64c-35.3 0-64 28.7-64 64v96c0 17.7 14.3 32 32 32H64v64c0 35.3 28.7 64 64 64H384c35.3 0 64-28.7 64-64V384zM432 248a24 24 0 1 1 0 48 24 24 0 1 1 0-48z"/></svg>
<div class="t" style="left:1392.75px;top:119.65px;font-size:14px;line-height:14px;color:#111827;font-weight:400;transform:scaleX(1.0598);transform-origin:0 0;-webkit-text-stroke:0.4px #111827;">Printer</div>
<div class="t" style="left:1456.50px;top:110.00px;width:123.50px;height:32.00px;background:#f3f4f6;border-radius:6px;"></div>
<svg class="t" style="left:1469.00px;top:119.00px;width:14.00px;height:14.00px" viewBox="0 0 512 512" preserveAspectRatio="none" fill="#111827"><path d="M256 32c14.2 0 27.3 7.5 34.5 19.8l216 368c7.3 12.4 7.3 27.7 .2 40.1S486.3 480 472 480H40c-14.3 0-27.6-7.7-34.7-20.1s-7-27.8 .2-40.1l216-368C228.7 39.5 241.8 32 256 32zm0 128c-13.3 0-24 10.7-24 24V296c0 13.3 10.7 24 24 24s24-10.7 24-24V184c0-13.3-10.7-24-24-24zm32 224a32 32 0 1 0 -64 0 32 32 0 1 0 64 0z"/></svg>
<div class="t" style="left:1490.65px;top:119.65px;font-size:14px;line-height:14px;color:#111827;font-weight:400;transform:scaleX(1.0620);transform-origin:0 0;-webkit-text-stroke:0.4px #111827;">Diagnostics</div>
<div class="t" style="left:915.50px;top:150.00px;width:861.50px;height:950.00px;background:#282c34;border-radius:4px"></div>
<div class="t" style="left:915.50px;top:194.00px;width:861.50px;height:1.00px;background:#3e4451"></div>
<div class="t" style="left:927.00px;top:165.55px;font-size:14px;line-height:14px;color:#d1d5db;font-weight:400;transform:scaleX(1.0230);transform-origin:0 0;-webkit-text-stroke:0.15px #d1d5db;">Parser Options:</div>
<svg class="t" style="left:1043.00px;top:166.00px;width:12px;height:12px" viewBox="0 0 12 12"><rect x="0" y="0" width="12" height="12" rx="2.6" fill="#ffffff"/></svg>
<div class="t" style="left:1061.65px;top:165.55px;font-size:14px;line-height:14px;color:#d1d5db;font-weight:400;transform:scaleX(1.0419);transform-origin:0 0;-webkit-text-stroke:0.15px #d1d5db;">Track whitespace</div>
<svg class="t" style="left:1186.00px;top:166.00px;width:12px;height:12px" viewBox="0 0 12 12"><defs><linearGradient id="cbg" x1="0" y1="0" x2="0" y2="1"><stop offset="0" stop-color="#3b99fc"/><stop offset="1" stop-color="#0a72f5"/></linearGradient></defs><rect x="0" y="0" width="12" height="12" rx="2.6" fill="url(#cbg)"/><path d="M2.4 6.3L5.2 9.2L9.6 2.8" stroke="#fff" stroke-width="1.9" fill="none" stroke-linecap="round" stroke-linejoin="round"/></svg>
<div class="t" style="left:1204.10px;top:165.55px;font-size:14px;line-height:14px;color:#d1d5db;font-weight:400;transform:scaleX(1.0819);transform-origin:0 0;-webkit-text-stroke:0.15px #d1d5db;">Strict</div>
<svg class="t" style="left:1251.00px;top:166.00px;width:12px;height:12px" viewBox="0 0 12 12"><defs><linearGradient id="cbg" x1="0" y1="0" x2="0" y2="1"><stop offset="0" stop-color="#3b99fc"/><stop offset="1" stop-color="#0a72f5"/></linearGradient></defs><rect x="0" y="0" width="12" height="12" rx="2.6" fill="url(#cbg)"/><path d="M2.4 6.3L5.2 9.2L9.6 2.8" stroke="#fff" stroke-width="1.9" fill="none" stroke-linecap="round" stroke-linejoin="round"/></svg>
<div class="t" style="left:1269.25px;top:165.55px;font-size:14px;line-height:14px;color:#d1d5db;font-weight:400;transform:scaleX(1.0189);transform-origin:0 0;-webkit-text-stroke:0.15px #d1d5db;">Analyze</div>
<svg class="t" style="left:1332.00px;top:166.00px;width:12px;height:12px" viewBox="0 0 12 12"><rect x="0" y="0" width="12" height="12" rx="2.6" fill="#ffffff"/></svg>
<div class="t" style="left:1350.20px;top:165.55px;font-size:14px;line-height:14px;color:#d1d5db;font-weight:400;transform:scaleX(1.0431);transform-origin:0 0;-webkit-text-stroke:0.15px #d1d5db;">Action View helpers</div>
<svg class="t" style="left:1489.50px;top:166.00px;width:12px;height:12px" viewBox="0 0 12 12"><rect x="0" y="0" width="12" height="12" rx="2.6" fill="#ffffff"/></svg>
<div class="t" style="left:1506.90px;top:165.55px;font-size:14px;line-height:14px;color:#d1d5db;font-weight:400;transform:scaleX(1.0349);transform-origin:0 0;-webkit-text-stroke:0.15px #d1d5db;">Prism program</div>
<svg class="t" style="left:1614.00px;top:166.00px;width:12px;height:12px" viewBox="0 0 12 12"><rect x="0" y="0" width="12" height="12" rx="2.6" fill="#ffffff"/></svg>
<div class="t" style="left:1631.50px;top:165.55px;font-size:14px;line-height:14px;color:#d1d5db;font-weight:400;transform:scaleX(1.0282);transform-origin:0 0;-webkit-text-stroke:0.15px #d1d5db;">Prism nodes</div>
<div class="t m" style="left:931.400px;top:220.142px;font-size:16px;line-height:20px;-webkit-text-stroke:0.25px;letter-spacing:0.023px;transform:scaleY(1.06);transform-origin:0 14.258px"><span style="color:#e5c07b;font-weight:bold;-webkit-text-stroke:0.7px">@</span><span style="color:#e5c07b;font-weight:bold;-webkit-text-stroke:0"> DocumentNode</span><span style="color:#ffffff"> </span><span style="color:#a4abb8;font-style:italic">(location: (1:0)<b class="hy">-</b>(27:5))</span></div>
<div class="t m" style="left:969.900px;top:240.142px;font-size:16px;line-height:20px;-webkit-text-stroke:0.25px;letter-spacing:0.023px;transform:scaleY(1.06);transform-origin:0 14.258px"><span style="color:#ffffff">errors: </span><span style="color:#a4abb8">[]</span></div>
<div class="t m" style="left:969.900px;top:260.142px;font-size:16px;line-height:20px;-webkit-text-stroke:0.25px;letter-spacing:0.023px;transform:scaleY(1.06);transform-origin:0 14.258px"><span style="color:#ffffff">children: </span><span style="color:#5c7e8c;font-style:italic">(24 items)</span></div>
<div class="t m" style="left:1008.400px;top:280.142px;font-size:16px;line-height:20px;-webkit-text-stroke:0.25px;letter-spacing:0.023px;transform:scaleY(1.06);transform-origin:0 14.258px"><span style="color:#e5c07b;font-weight:bold;-webkit-text-stroke:0.7px">@</span><span style="color:#e5c07b;font-weight:bold;-webkit-text-stroke:0"> HTMLCommentNode</span><span style="color:#ffffff"> </span><span style="color:#a4abb8;font-style:italic">(location: (1:0)<b class="hy">-</b>(1:30))</span></div>
<div class="t m" style="left:1046.900px;top:300.142px;font-size:16px;line-height:20px;-webkit-text-stroke:0.25px;letter-spacing:0.023px;transform:scaleY(1.06);transform-origin:0 14.258px"><span style="color:#ffffff">errors: </span><span style="color:#a4abb8">[]</span></div>
<div class="t m" style="left:1046.900px;top:320.142px;font-size:16px;line-height:20px;-webkit-text-stroke:0.25px;letter-spacing:0.023px;transform:scaleY(1.06);transform-origin:0 14.258px"><span style="color:#ffffff">comment_start: </span><span style="color:#98c379">&quot;&lt;!<b class="hy">-</b><b class="hy">-</b>&quot;</span><span style="color:#ffffff"> </span><span style="color:#a4abb8;font-style:italic">(location: (1:0)<b class="hy">-</b>(1:4))</span></div>
<div class="t m" style="left:1046.900px;top:340.142px;font-size:16px;line-height:20px;-webkit-text-stroke:0.25px;letter-spacing:0.023px;transform:scaleY(1.06);transform-origin:0 14.258px"><span style="color:#ffffff">children: </span><span style="color:#5c7e8c;font-style:italic">(1 item)</span></div>
<div class="t m" style="left:1085.400px;top:360.142px;font-size:16px;line-height:20px;-webkit-text-stroke:0.25px;letter-spacing:0.023px;transform:scaleY(1.06);transform-origin:0 14.258px"><span style="color:#e5c07b;font-weight:bold;-webkit-text-stroke:0.7px">@</span><span style="color:#e5c07b;font-weight:bold;-webkit-text-stroke:0"> LiteralNode</span><span style="color:#ffffff"> </span><span style="color:#a4abb8;font-style:italic">(location: (1:4)<b class="hy">-</b>(1:27))</span></div>
<div class="t m" style="left:1123.900px;top:380.142px;font-size:16px;line-height:20px;-webkit-text-stroke:0.25px;letter-spacing:0.023px;transform:scaleY(1.06);transform-origin:0 14.258px"><span style="color:#ffffff">errors: </span><span style="color:#a4abb8">[]</span></div>
<div class="t m" style="left:1123.900px;top:400.142px;font-size:16px;line-height:20px;-webkit-text-stroke:0.25px;letter-spacing:0.023px;transform:scaleY(1.06);transform-origin:0 14.258px"><span style="color:#ffffff">content: </span><span style="color:#98c379">&quot; Example HTML+ERB File &quot;</span></div>
<div class="t m" style="left:1046.900px;top:460.142px;font-size:16px;line-height:20px;-webkit-text-stroke:0.25px;letter-spacing:0.023px;transform:scaleY(1.06);transform-origin:0 14.258px"><span style="color:#ffffff">comment_end: </span><span style="color:#98c379">&quot;<b class="hy">-</b><b class="hy">-</b>&gt;&quot;</span><span style="color:#ffffff"> </span><span style="color:#a4abb8;font-style:italic">(location: (1:27)<b class="hy">-</b>(1:30))</span></div>
<div class="t m" style="left:1008.400px;top:500.142px;font-size:16px;line-height:20px;-webkit-text-stroke:0.25px;letter-spacing:0.023px;transform:scaleY(1.06);transform-origin:0 14.258px"><span style="color:#e5c07b;font-weight:bold;-webkit-text-stroke:0.7px">@</span><span style="color:#e5c07b;font-weight:bold;-webkit-text-stroke:0"> HTMLTextNode</span><span style="color:#ffffff"> </span><span style="color:#a4abb8;font-style:italic">(location: (1:30)<b class="hy">-</b>(3:0))</span></div>
<div class="t m" style="left:1046.900px;top:520.142px;font-size:16px;line-height:20px;-webkit-text-stroke:0.25px;letter-spacing:0.023px;transform:scaleY(1.06);transform-origin:0 14.258px"><span style="color:#ffffff">errors: </span><span style="color:#a4abb8">[]</span></div>
<div class="t m" style="left:1046.900px;top:540.142px;font-size:16px;line-height:20px;-webkit-text-stroke:0.25px;letter-spacing:0.023px;transform:scaleY(1.06);transform-origin:0 14.258px"><span style="color:#ffffff">content: </span><span style="color:#98c379">&quot;\n\n&quot;</span></div>
<div class="t m" style="left:1008.400px;top:580.142px;font-size:16px;line-height:20px;-webkit-text-stroke:0.25px;letter-spacing:0.023px;transform:scaleY(1.06);transform-origin:0 14.258px"><span style="color:#e5c07b;font-weight:bold;-webkit-text-stroke:0.7px">@</span><span style="color:#e5c07b;font-weight:bold;-webkit-text-stroke:0"> HTMLElementNode</span><span style="color:#ffffff"> </span><span style="color:#a4abb8;font-style:italic">(location: (3:0)<b class="hy">-</b>(3:22))</span></div>
<div class="t m" style="left:1046.900px;top:600.142px;font-size:16px;line-height:20px;-webkit-text-stroke:0.25px;letter-spacing:0.023px;transform:scaleY(1.06);transform-origin:0 14.258px"><span style="color:#ffffff">errors: </span><span style="color:#a4abb8">[]</span></div>
<div class="t m" style="left:1046.900px;top:620.142px;font-size:16px;line-height:20px;-webkit-text-stroke:0.25px;letter-spacing:0.023px;transform:scaleY(1.06);transform-origin:0 14.258px"><span style="color:#ffffff">open_tag:</span></div>
<div class="t m" style="left:1085.400px;top:640.142px;font-size:16px;line-height:20px;-webkit-text-stroke:0.25px;letter-spacing:0.023px;transform:scaleY(1.06);transform-origin:0 14.258px"><span style="color:#e5c07b;font-weight:bold;-webkit-text-stroke:0.7px">@</span><span style="color:#e5c07b;font-weight:bold;-webkit-text-stroke:0"> HTMLOpenTagNode</span><span style="color:#ffffff"> </span><span style="color:#a4abb8;font-style:italic">(location: (3:0)<b class="hy">-</b>(3:22))</span></div>
<div class="t m" style="left:1123.900px;top:660.142px;font-size:16px;line-height:20px;-webkit-text-stroke:0.25px;letter-spacing:0.023px;transform:scaleY(1.06);transform-origin:0 14.258px"><span style="color:#ffffff">errors: </span><span style="color:#a4abb8">[]</span></div>
<div class="t m" style="left:1123.900px;top:680.142px;font-size:16px;line-height:20px;-webkit-text-stroke:0.25px;letter-spacing:0.023px;transform:scaleY(1.06);transform-origin:0 14.258px"><span style="color:#ffffff">tag_opening: </span><span style="color:#98c379">&quot;&lt;&quot;</span><span style="color:#ffffff"> </span><span style="color:#a4abb8;font-style:italic">(location: (3:0)<b class="hy">-</b>(3:1))</span></div>
<div class="t m" style="left:1123.900px;top:700.142px;font-size:16px;line-height:20px;-webkit-text-stroke:0.25px;letter-spacing:0.023px;transform:scaleY(1.06);transform-origin:0 14.258px"><span style="color:#ffffff">tag_name: </span><span style="color:#98c379">&quot;input&quot;</span><span style="color:#ffffff"> </span><span style="color:#a4abb8;font-style:italic">(location: (3:1)<b class="hy">-</b>(3:6))</span></div>
<div class="t m" style="left:1123.900px;top:720.142px;font-size:16px;line-height:20px;-webkit-text-stroke:0.25px;letter-spacing:0.023px;transform:scaleY(1.06);transform-origin:0 14.258px"><span style="color:#ffffff">tag_closing: </span><span style="color:#98c379">&quot;/&gt;&quot;</span><span style="color:#ffffff"> </span><span style="color:#a4abb8;font-style:italic">(location: (3:20)<b class="hy">-</b>(3:22))</span></div>
<div class="t m" style="left:1123.900px;top:740.142px;font-size:16px;line-height:20px;-webkit-text-stroke:0.25px;letter-spacing:0.023px;transform:scaleY(1.06);transform-origin:0 14.258px"><span style="color:#ffffff">children: </span><span style="color:#5c7e8c;font-style:italic">(1 item)</span></div>
<div class="t m" style="left:1162.400px;top:760.142px;font-size:16px;line-height:20px;-webkit-text-stroke:0.25px;letter-spacing:0.023px;transform:scaleY(1.06);transform-origin:0 14.258px"><span style="color:#e5c07b;font-weight:bold;-webkit-text-stroke:0.7px">@</span><span style="color:#e5c07b;font-weight:bold;-webkit-text-stroke:0"> HTMLAttributeNode</span><span style="color:#ffffff"> </span><span style="color:#a4abb8;font-style:italic">(location: (3:11)<b class="hy">-</b>(3:19))</span></div>
<div class="t m" style="left:1200.900px;top:780.142px;font-size:16px;line-height:20px;-webkit-text-stroke:0.25px;letter-spacing:0.023px;transform:scaleY(1.06);transform-origin:0 14.258px"><span style="color:#ffffff">errors: </span><span style="color:#a4abb8">[]</span></div>
<div class="t m" style="left:1200.900px;top:800.142px;font-size:16px;line-height:20px;-webkit-text-stroke:0.25px;letter-spacing:0.023px;transform:scaleY(1.06);transform-origin:0 14.258px"><span style="color:#ffffff">name:</span></div>
<div class="t m" style="left:1239.400px;top:820.142px;font-size:16px;line-height:20px;-webkit-text-stroke:0.25px;letter-spacing:0.023px;transform:scaleY(1.06);transform-origin:0 14.258px"><span style="color:#e5c07b;font-weight:bold;-webkit-text-stroke:0.7px">@</span><span style="color:#e5c07b;font-weight:bold;-webkit-text-stroke:0"> HTMLAttributeNameNode</span><span style="color:#ffffff"> </span><span style="color:#a4abb8;font-style:italic">(location: (3:11)<b class="hy">-</b>(3:19))</span></div>
<div class="t m" style="left:1277.900px;top:840.142px;font-size:16px;line-height:20px;-webkit-text-stroke:0.25px;letter-spacing:0.023px;transform:scaleY(1.06);transform-origin:0 14.258px"><span style="color:#ffffff">errors: </span><span style="color:#a4abb8">[]</span></div>
<div class="t m" style="left:1277.900px;top:860.142px;font-size:16px;line-height:20px;-webkit-text-stroke:0.25px;letter-spacing:0.023px;transform:scaleY(1.06);transform-origin:0 14.258px"><span style="color:#ffffff">children: </span><span style="color:#5c7e8c;font-style:italic">(1 item)</span></div>
<div class="t m" style="left:1316.400px;top:880.142px;font-size:16px;line-height:20px;-webkit-text-stroke:0.25px;letter-spacing:0.023px;transform:scaleY(1.06);transform-origin:0 14.258px"><span style="color:#e5c07b;font-weight:bold;-webkit-text-stroke:0.7px">@</span><span style="color:#e5c07b;font-weight:bold;-webkit-text-stroke:0"> LiteralNode</span><span style="color:#ffffff"> </span><span style="color:#a4abb8;font-style:italic">(location: (3:11)<b class="hy">-</b>(3:19))</span></div>
<div class="t m" style="left:1354.900px;top:900.142px;font-size:16px;line-height:20px;-webkit-text-stroke:0.25px;letter-spacing:0.023px;transform:scaleY(1.06);transform-origin:0 14.258px"><span style="color:#ffffff">errors: </span><span style="color:#a4abb8">[]</span></div>
<div class="t m" style="left:1354.900px;top:920.142px;font-size:16px;line-height:20px;-webkit-text-stroke:0.25px;letter-spacing:0.023px;transform:scaleY(1.06);transform-origin:0 14.258px"><span style="color:#ffffff">content: </span><span style="color:#98c379">&quot;required&quot;</span></div>
<div class="t m" style="left:1200.900px;top:1000.142px;font-size:16px;line-height:20px;-webkit-text-stroke:0.25px;letter-spacing:0.023px;transform:scaleY(1.06);transform-origin:0 14.258px"><span style="color:#ffffff">equals: </span><span style="color:#c678dd">∅</span></div>
<div class="t m" style="left:1200.900px;top:1020.142px;font-size:16px;line-height:20px;-webkit-text-stroke:0.25px;letter-spacing:0.023px;transform:scaleY(1.06);transform-origin:0 14.258px"><span style="color:#ffffff">value: </span><span style="color:#c678dd">∅</span></div>
<div class="t" style="left:935.512px;top:238.250px;width:1.400px;height:20.000px;background:#a9b1c0"></div>
<div class="t" style="left:935.512px;top:248.550px;width:24.763px;height:1.400px;background:#a9b1c0"></div>
<div class="t" style="left:935.512px;top:258.250px;width:1.400px;height:11.700px;background:#a9b1c0"></div>
<div class="t" style="left:935.512px;top:268.550px;width:24.763px;height:1.400px;background:#a9b1c0"></div>
<div class="t" style="left:974.012px;top:278.250px;width:1.400px;height:20.000px;background:#a9b1c0"></div>
<div class="t" style="left:974.012px;top:288.550px;width:24.763px;height:1.400px;background:#a9b1c0"></div>
<div class="t" style="left:974.012px;top:298.250px;width:1.400px;height:20.000px;background:#a9b1c0"></div>
<div class="t" style="left:1012.512px;top:298.250px;width:1.400px;height:20.000px;background:#a9b1c0"></div>
<div class="t" style="left:1012.512px;top:308.550px;width:24.763px;height:1.400px;background:#a9b1c0"></div>
<div class="t" style="left:974.012px;top:318.250px;width:1.400px;height:20.000px;background:#a9b1c0"></div>
<div class="t" style="left:1012.512px;top:318.250px;width:1.400px;height:20.000px;background:#a9b1c0"></div>
<div class="t" style="left:1012.512px;top:328.550px;width:24.763px;height:1.400px;background:#a9b1c0"></div>
<div class="t" style="left:974.012px;top:338.250px;width:1.400px;height:20.000px;background:#a9b1c0"></div>
<div class="t" style="left:1012.512px;top:338.250px;width:1.400px;height:20.000px;background:#a9b1c0"></div>
<div class="t" style="left:1012.512px;top:348.550px;width:24.763px;height:1.400px;background:#a9b1c0"></div>
<div class="t" style="left:974.012px;top:358.250px;width:1.400px;height:20.000px;background:#a9b1c0"></div>
<div class="t" style="left:1012.512px;top:358.250px;width:1.400px;height:20.000px;background:#a9b1c0"></div>
<div class="t" style="left:1051.013px;top:358.250px;width:1.400px;height:11.700px;background:#a9b1c0"></div>
<div class="t" style="left:1051.013px;top:368.550px;width:24.763px;height:1.400px;background:#a9b1c0"></div>
<div class="t" style="left:974.012px;top:378.250px;width:1.400px;height:20.000px;background:#a9b1c0"></div>
<div class="t" style="left:1012.512px;top:378.250px;width:1.400px;height:20.000px;background:#a9b1c0"></div>
<div class="t" style="left:1089.513px;top:378.250px;width:1.400px;height:20.000px;background:#a9b1c0"></div>
<div class="t" style="left:1089.513px;top:388.550px;width:24.763px;height:1.400px;background:#a9b1c0"></div>
<div class="t" style="left:974.012px;top:398.250px;width:1.400px;height:20.000px;background:#a9b1c0"></div>
<div class="t" style="left:1012.512px;top:398.250px;width:1.400px;height:20.000px;background:#a9b1c0"></div>
<div class="t" style="left:1089.513px;top:398.250px;width:1.400px;height:11.700px;background:#a9b1c0"></div>
<div class="t" style="left:1089.513px;top:408.550px;width:24.763px;height:1.400px;background:#a9b1c0"></div>
<div class="t" style="left:974.012px;top:418.250px;width:1.400px;height:20.000px;background:#a9b1c0"></div>
<div class="t" style="left:1012.512px;top:418.250px;width:1.400px;height:20.000px;background:#a9b1c0"></div>
<div class="t" style="left:974.012px;top:438.250px;width:1.400px;height:20.000px;background:#a9b1c0"></div>
<div class="t" style="left:1012.512px;top:438.250px;width:1.400px;height:20.000px;background:#a9b1c0"></div>
<div class="t" style="left:974.012px;top:458.250px;width:1.400px;height:20.000px;background:#a9b1c0"></div>
<div class="t" style="left:1012.512px;top:458.250px;width:1.400px;height:11.700px;background:#a9b1c0"></div>
<div class="t" style="left:1012.512px;top:468.550px;width:24.763px;height:1.400px;background:#a9b1c0"></div>
<div class="t" style="left:974.012px;top:478.250px;width:1.400px;height:20.000px;background:#a9b1c0"></div>
<div class="t" style="left:974.012px;top:498.250px;width:1.400px;height:20.000px;background:#a9b1c0"></div>
<div class="t" style="left:974.012px;top:508.550px;width:24.763px;height:1.400px;background:#a9b1c0"></div>
<div class="t" style="left:974.012px;top:518.250px;width:1.400px;height:20.000px;background:#a9b1c0"></div>
<div class="t" style="left:1012.512px;top:518.250px;width:1.400px;height:20.000px;background:#a9b1c0"></div>
<div class="t" style="left:1012.512px;top:528.550px;width:24.763px;height:1.400px;background:#a9b1c0"></div>
<div class="t" style="left:974.012px;top:538.250px;width:1.400px;height:20.000px;background:#a9b1c0"></div>
<div class="t" style="left:1012.512px;top:538.250px;width:1.400px;height:11.700px;background:#a9b1c0"></div>
<div class="t" style="left:1012.512px;top:548.550px;width:24.763px;height:1.400px;background:#a9b1c0"></div>
<div class="t" style="left:974.012px;top:558.250px;width:1.400px;height:20.000px;background:#a9b1c0"></div>
<div class="t" style="left:974.012px;top:578.250px;width:1.400px;height:20.000px;background:#a9b1c0"></div>
<div class="t" style="left:974.012px;top:588.550px;width:24.763px;height:1.400px;background:#a9b1c0"></div>
<div class="t" style="left:974.012px;top:598.250px;width:1.400px;height:20.000px;background:#a9b1c0"></div>
<div class="t" style="left:1012.512px;top:598.250px;width:1.400px;height:20.000px;background:#a9b1c0"></div>
<div class="t" style="left:1012.512px;top:608.550px;width:24.763px;height:1.400px;background:#a9b1c0"></div>
<div class="t" style="left:974.012px;top:618.250px;width:1.400px;height:20.000px;background:#a9b1c0"></div>
<div class="t" style="left:1012.512px;top:618.250px;width:1.400px;height:20.000px;background:#a9b1c0"></div>
<div class="t" style="left:1012.512px;top:628.550px;width:24.763px;height:1.400px;background:#a9b1c0"></div>
<div class="t" style="left:974.012px;top:638.250px;width:1.400px;height:20.000px;background:#a9b1c0"></div>
<div class="t" style="left:1012.512px;top:638.250px;width:1.400px;height:20.000px;background:#a9b1c0"></div>
<div class="t" style="left:1051.013px;top:638.250px;width:1.400px;height:11.700px;background:#a9b1c0"></div>
<div class="t" style="left:1051.013px;top:648.550px;width:24.763px;height:1.400px;background:#a9b1c0"></div>
<div class="t" style="left:974.012px;top:658.250px;width:1.400px;height:20.000px;background:#a9b1c0"></div>
<div class="t" style="left:1012.512px;top:658.250px;width:1.400px;height:20.000px;background:#a9b1c0"></div>
<div class="t" style="left:1089.513px;top:658.250px;width:1.400px;height:20.000px;background:#a9b1c0"></div>
<div class="t" style="left:1089.513px;top:668.550px;width:24.763px;height:1.400px;background:#a9b1c0"></div>
<div class="t" style="left:974.012px;top:678.250px;width:1.400px;height:20.000px;background:#a9b1c0"></div>
<div class="t" style="left:1012.512px;top:678.250px;width:1.400px;height:20.000px;background:#a9b1c0"></div>
<div class="t" style="left:1089.513px;top:678.250px;width:1.400px;height:20.000px;background:#a9b1c0"></div>
<div class="t" style="left:1089.513px;top:688.550px;width:24.763px;height:1.400px;background:#a9b1c0"></div>
<div class="t" style="left:974.012px;top:698.250px;width:1.400px;height:20.000px;background:#a9b1c0"></div>
<div class="t" style="left:1012.512px;top:698.250px;width:1.400px;height:20.000px;background:#a9b1c0"></div>
<div class="t" style="left:1089.513px;top:698.250px;width:1.400px;height:20.000px;background:#a9b1c0"></div>
<div class="t" style="left:1089.513px;top:708.550px;width:24.763px;height:1.400px;background:#a9b1c0"></div>
<div class="t" style="left:974.012px;top:718.250px;width:1.400px;height:20.000px;background:#a9b1c0"></div>
<div class="t" style="left:1012.512px;top:718.250px;width:1.400px;height:20.000px;background:#a9b1c0"></div>
<div class="t" style="left:1089.513px;top:718.250px;width:1.400px;height:20.000px;background:#a9b1c0"></div>
<div class="t" style="left:1089.513px;top:728.550px;width:24.763px;height:1.400px;background:#a9b1c0"></div>
<div class="t" style="left:974.012px;top:738.250px;width:1.400px;height:20.000px;background:#a9b1c0"></div>
<div class="t" style="left:1012.512px;top:738.250px;width:1.400px;height:20.000px;background:#a9b1c0"></div>
<div class="t" style="left:1089.513px;top:738.250px;width:1.400px;height:20.000px;background:#a9b1c0"></div>
<div class="t" style="left:1089.513px;top:748.550px;width:24.763px;height:1.400px;background:#a9b1c0"></div>
<div class="t" style="left:974.012px;top:758.250px;width:1.400px;height:20.000px;background:#a9b1c0"></div>
<div class="t" style="left:1012.512px;top:758.250px;width:1.400px;height:20.000px;background:#a9b1c0"></div>
<div class="t" style="left:1089.513px;top:758.250px;width:1.400px;height:20.000px;background:#a9b1c0"></div>
<div class="t" style="left:1128.013px;top:758.250px;width:1.400px;height:11.700px;background:#a9b1c0"></div>
<div class="t" style="left:1128.013px;top:768.550px;width:24.763px;height:1.400px;background:#a9b1c0"></div>
<div class="t" style="left:974.012px;top:778.250px;width:1.400px;height:20.000px;background:#a9b1c0"></div>
<div class="t" style="left:1012.512px;top:778.250px;width:1.400px;height:20.000px;background:#a9b1c0"></div>
<div class="t" style="left:1089.513px;top:778.250px;width:1.400px;height:20.000px;background:#a9b1c0"></div>
<div class="t" style="left:1166.513px;top:778.250px;width:1.400px;height:20.000px;background:#a9b1c0"></div>
<div class="t" style="left:1166.513px;top:788.550px;width:24.763px;height:1.400px;background:#a9b1c0"></div>
<div class="t" style="left:974.012px;top:798.250px;width:1.400px;height:20.000px;background:#a9b1c0"></div>
<div class="t" style="left:1012.512px;top:798.250px;width:1.400px;height:20.000px;background:#a9b1c0"></div>
<div class="t" style="left:1089.513px;top:798.250px;width:1.400px;height:20.000px;background:#a9b1c0"></div>
<div class="t" style="left:1166.513px;top:798.250px;width:1.400px;height:20.000px;background:#a9b1c0"></div>
<div class="t" style="left:1166.513px;top:808.550px;width:24.763px;height:1.400px;background:#a9b1c0"></div>
<div class="t" style="left:974.012px;top:818.250px;width:1.400px;height:20.000px;background:#a9b1c0"></div>
<div class="t" style="left:1012.512px;top:818.250px;width:1.400px;height:20.000px;background:#a9b1c0"></div>
<div class="t" style="left:1089.513px;top:818.250px;width:1.400px;height:20.000px;background:#a9b1c0"></div>
<div class="t" style="left:1166.513px;top:818.250px;width:1.400px;height:20.000px;background:#a9b1c0"></div>
<div class="t" style="left:1205.013px;top:818.250px;width:1.400px;height:11.700px;background:#a9b1c0"></div>
<div class="t" style="left:1205.013px;top:828.550px;width:24.763px;height:1.400px;background:#a9b1c0"></div>
<div class="t" style="left:974.012px;top:838.250px;width:1.400px;height:20.000px;background:#a9b1c0"></div>
<div class="t" style="left:1012.512px;top:838.250px;width:1.400px;height:20.000px;background:#a9b1c0"></div>
<div class="t" style="left:1089.513px;top:838.250px;width:1.400px;height:20.000px;background:#a9b1c0"></div>
<div class="t" style="left:1166.513px;top:838.250px;width:1.400px;height:20.000px;background:#a9b1c0"></div>
<div class="t" style="left:1243.513px;top:838.250px;width:1.400px;height:20.000px;background:#a9b1c0"></div>
<div class="t" style="left:1243.513px;top:848.550px;width:24.763px;height:1.400px;background:#a9b1c0"></div>
<div class="t" style="left:974.012px;top:858.250px;width:1.400px;height:20.000px;background:#a9b1c0"></div>
<div class="t" style="left:1012.512px;top:858.250px;width:1.400px;height:20.000px;background:#a9b1c0"></div>
<div class="t" style="left:1089.513px;top:858.250px;width:1.400px;height:20.000px;background:#a9b1c0"></div>
<div class="t" style="left:1166.513px;top:858.250px;width:1.400px;height:20.000px;background:#a9b1c0"></div>
<div class="t" style="left:1243.513px;top:858.250px;width:1.400px;height:11.700px;background:#a9b1c0"></div>
<div class="t" style="left:1243.513px;top:868.550px;width:24.763px;height:1.400px;background:#a9b1c0"></div>
<div class="t" style="left:974.012px;top:878.250px;width:1.400px;height:20.000px;background:#a9b1c0"></div>
<div class="t" style="left:1012.512px;top:878.250px;width:1.400px;height:20.000px;background:#a9b1c0"></div>
<div class="t" style="left:1089.513px;top:878.250px;width:1.400px;height:20.000px;background:#a9b1c0"></div>
<div class="t" style="left:1166.513px;top:878.250px;width:1.400px;height:20.000px;background:#a9b1c0"></div>
<div class="t" style="left:1282.013px;top:878.250px;width:1.400px;height:11.700px;background:#a9b1c0"></div>
<div class="t" style="left:1282.013px;top:888.550px;width:24.763px;height:1.400px;background:#a9b1c0"></div>
<div class="t" style="left:974.012px;top:898.250px;width:1.400px;height:20.000px;background:#a9b1c0"></div>
<div class="t" style="left:1012.512px;top:898.250px;width:1.400px;height:20.000px;background:#a9b1c0"></div>
<div class="t" style="left:1089.513px;top:898.250px;width:1.400px;height:20.000px;background:#a9b1c0"></div>
<div class="t" style="left:1166.513px;top:898.250px;width:1.400px;height:20.000px;background:#a9b1c0"></div>
<div class="t" style="left:1320.513px;top:898.250px;width:1.400px;height:20.000px;background:#a9b1c0"></div>
<div class="t" style="left:1320.513px;top:908.550px;width:24.763px;height:1.400px;background:#a9b1c0"></div>
<div class="t" style="left:974.012px;top:918.250px;width:1.400px;height:20.000px;background:#a9b1c0"></div>
<div class="t" style="left:1012.512px;top:918.250px;width:1.400px;height:20.000px;background:#a9b1c0"></div>
<div class="t" style="left:1089.513px;top:918.250px;width:1.400px;height:20.000px;background:#a9b1c0"></div>
<div class="t" style="left:1166.513px;top:918.250px;width:1.400px;height:20.000px;background:#a9b1c0"></div>
<div class="t" style="left:1320.513px;top:918.250px;width:1.400px;height:11.700px;background:#a9b1c0"></div>
<div class="t" style="left:1320.513px;top:928.550px;width:24.763px;height:1.400px;background:#a9b1c0"></div>
<div class="t" style="left:974.012px;top:938.250px;width:1.400px;height:20.000px;background:#a9b1c0"></div>
<div class="t" style="left:1012.512px;top:938.250px;width:1.400px;height:20.000px;background:#a9b1c0"></div>
<div class="t" style="left:1089.513px;top:938.250px;width:1.400px;height:20.000px;background:#a9b1c0"></div>
<div class="t" style="left:1166.513px;top:938.250px;width:1.400px;height:20.000px;background:#a9b1c0"></div>
<div class="t" style="left:974.012px;top:958.250px;width:1.400px;height:20.000px;background:#a9b1c0"></div>
<div class="t" style="left:1012.512px;top:958.250px;width:1.400px;height:20.000px;background:#a9b1c0"></div>
<div class="t" style="left:1089.513px;top:958.250px;width:1.400px;height:20.000px;background:#a9b1c0"></div>
<div class="t" style="left:1166.513px;top:958.250px;width:1.400px;height:20.000px;background:#a9b1c0"></div>
<div class="t" style="left:974.012px;top:978.250px;width:1.400px;height:20.000px;background:#a9b1c0"></div>
<div class="t" style="left:1012.512px;top:978.250px;width:1.400px;height:20.000px;background:#a9b1c0"></div>
<div class="t" style="left:1089.513px;top:978.250px;width:1.400px;height:20.000px;background:#a9b1c0"></div>
<div class="t" style="left:1166.513px;top:978.250px;width:1.400px;height:20.000px;background:#a9b1c0"></div>
<div class="t" style="left:974.012px;top:998.250px;width:1.400px;height:20.000px;background:#a9b1c0"></div>
<div class="t" style="left:1012.512px;top:998.250px;width:1.400px;height:20.000px;background:#a9b1c0"></div>
<div class="t" style="left:1089.513px;top:998.250px;width:1.400px;height:20.000px;background:#a9b1c0"></div>
<div class="t" style="left:1166.513px;top:998.250px;width:1.400px;height:20.000px;background:#a9b1c0"></div>
<div class="t" style="left:1166.513px;top:1008.550px;width:24.763px;height:1.400px;background:#a9b1c0"></div>
<div class="t" style="left:974.012px;top:1018.250px;width:1.400px;height:20.000px;background:#a9b1c0"></div>
<div class="t" style="left:1012.512px;top:1018.250px;width:1.400px;height:20.000px;background:#a9b1c0"></div>
<div class="t" style="left:1089.513px;top:1018.250px;width:1.400px;height:20.000px;background:#a9b1c0"></div>
<div class="t" style="left:1166.513px;top:1018.250px;width:1.400px;height:11.700px;background:#a9b1c0"></div>
<div class="t" style="left:1166.513px;top:1028.550px;width:24.763px;height:1.400px;background:#a9b1c0"></div>
<div class="t" style="left:974.012px;top:1038.250px;width:1.400px;height:20.000px;background:#a9b1c0"></div>
<div class="t" style="left:1012.512px;top:1038.250px;width:1.400px;height:20.000px;background:#a9b1c0"></div>
<div class="t" style="left:1089.513px;top:1038.250px;width:1.400px;height:20.000px;background:#a9b1c0"></div>
</div></body></html>
